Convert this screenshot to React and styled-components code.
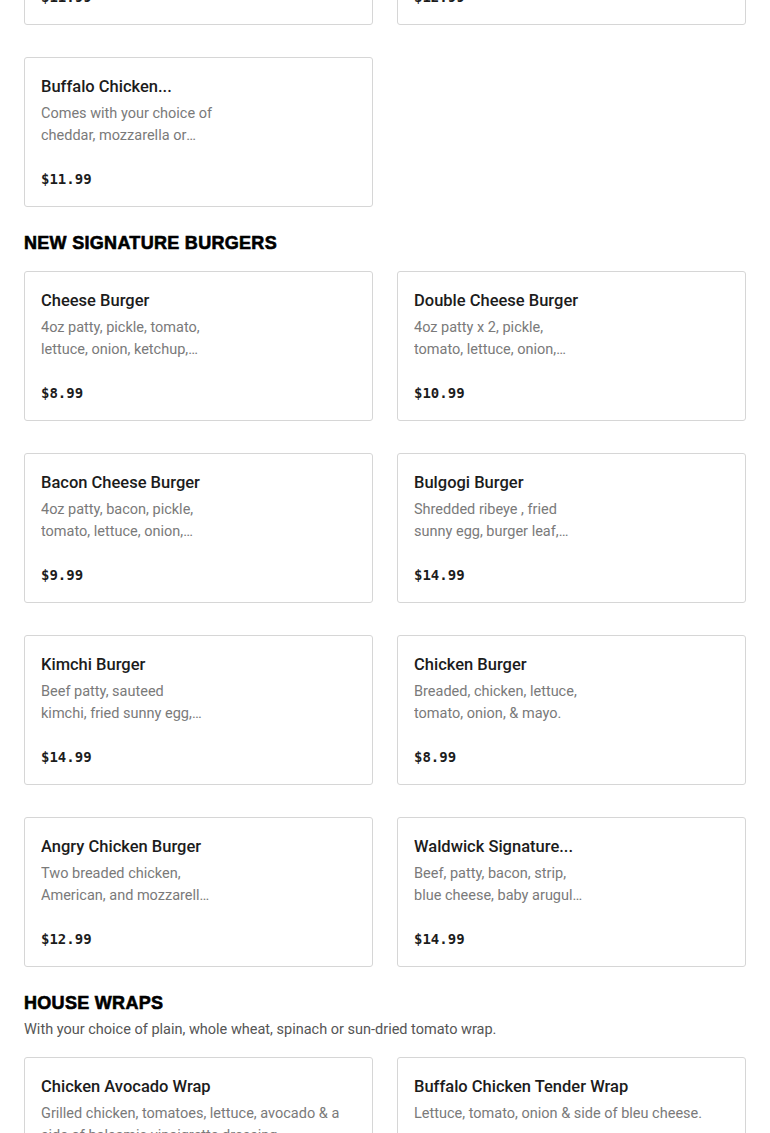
import styled, { createGlobalStyle } from "styled-components";

const GlobalStyle = createGlobalStyle`
  html, body {
    margin: 0;
    padding: 0;
    background: #ffffff;
  }
  body {
    font-family: Roboto, "Liberation Sans", Arial, sans-serif;
    color: #1c1c1c;
  }
`;

// names are shortened the way the menu shows them
const sections = [
  {
    title: null,
    items: [
      { name: "Buffalo Chicken...", desc: "Comes with your choice of cheddar, mozzarella or american cheese.", price: "$11.99", image: true },
      { name: "Chicken Parm Sandwich", desc: "Breaded chicken, marinara sauce and melted mozzarella cheese.", price: "$12.99", image: true },
      { name: "Buffalo Chicken...", desc: "Comes with your choice of cheddar, mozzarella or american cheese.", price: "$11.99", image: true },
    ],
  },
  {
    title: "NEW SIGNATURE BURGERS",
    items: [
      { name: "Cheese Burger", desc: "4oz patty, pickle, tomato, lettuce, onion, ketchup, mayo & american cheese.", price: "$8.99", image: true },
      { name: "Double Cheese Burger", desc: "4oz patty x 2, pickle, tomato, lettuce, onion, ketchup, mayo & american cheese.", price: "$10.99", image: true },
      { name: "Bacon Cheese Burger", desc: "4oz patty, bacon, pickle, tomato, lettuce, onion, ketchup, mayo & american cheese.", price: "$9.99", image: true },
      { name: "Bulgogi Burger", desc: "Shredded ribeye , fried sunny egg, burger leaf, onion & bulgogi sauce.", price: "$14.99", image: true },
      { name: "Kimchi Burger", desc: "Beef patty, sauteed kimchi,\u00a0fried sunny egg, lettuce & spicy mayo.", price: "$14.99", image: true },
      { name: "Chicken Burger", desc: "Breaded, chicken, lettuce, tomato, onion, & mayo.", price: "$8.99", image: true },
      { name: "Angry Chicken Burger", desc: "Two breaded chicken, American, and mozzarella cheese, jalapeno & spicy mayo.", price: "$12.99", image: true },
      { name: "Waldwick Signature...", desc: "Beef, patty, bacon, strip, blue cheese, baby arugula & caramelized onion.", price: "$14.99", image: true },
    ],
  },
  {
    title: "HOUSE WRAPS",
    note: "With your choice of plain, whole wheat, spinach or sun-dried tomato wrap.",
    items: [
      { name: "Chicken Avocado Wrap", desc: "Grilled chicken, tomatoes, lettuce, avocado & a side of balsamic vinaigrette dressing.", price: "$11.99" },
      { name: "Buffalo Chicken Tender Wrap", desc: "Lettuce, tomato, onion & side of bleu cheese.", price: "$11.99" },
    ],
  },
];

export default function App() {
  return (
    <>
      <GlobalStyle />
      <Page>
        {sections.map((section, i) => (
          <Section key={i} $lead={i === 0}>
            {section.title && (
              <Header>
                <Heading>{section.title}</Heading>
                {section.note && <Note>{section.note}</Note>}
              </Header>
            )}
            <Grid>
              {section.items.map((item, j) => (
                <Card key={j}>
                  <Body $narrow={item.image}>
                    <Name>{item.name}</Name>
                    <Desc>{item.desc}</Desc>
                  </Body>
                  <Price>{item.price}</Price>
                </Card>
              ))}
            </Grid>
          </Section>
        ))}
      </Page>
    </>
  );
}

const Page = styled.main`
  padding: 0 24px 40px;
  overflow: hidden;
`;

const Section = styled.section`
  display: flex;
  flex-direction: column;
  gap: 16px;
  margin-top: ${(p) => (p.$lead ? "-125px" : "24px")};
`;

const Header = styled.div`
  display: flex;
  flex-direction: column;
  gap: 4px;
`;

const Heading = styled.h2`
  margin: 0;
  font-family: "Liberation Sans", Arial, sans-serif;
  font-weight: 900;
  font-size: 18px;
  line-height: 24px;
  letter-spacing: 0.3px;
  color: #000;
  -webkit-text-stroke: 0.6px #000;
`;

const Note = styled.p`
  margin: 0;
  font-size: 14.5px;
  line-height: 22px;
  color: #555;
`;

const Grid = styled.div`
  display: grid;
  grid-template-columns: 1fr 1fr;
  column-gap: 24px;
  row-gap: 32px;
`;

const Card = styled.div`
  box-sizing: border-box;
  height: 150px;
  padding: 17px 16px 16px;
  border: 1px solid #d6d6d6;
  border-radius: 3px;
  background: #fff;
  display: flex;
  flex-direction: column;
  justify-content: space-between;
  overflow: hidden;
`;

const Body = styled.div`
  display: flex;
  flex-direction: column;
  gap: 4px;
  max-width: ${(p) => (p.$narrow ? "172px" : "none")};
`;

const Name = styled.h3`
  margin: 0;
  font-size: 16.5px;
  font-weight: 500;
  line-height: 24px;
  color: #1c1c1c;
  white-space: nowrap;
  overflow: hidden;
  text-overflow: ellipsis;
`;

const Desc = styled.p`
  margin: 0;
  font-size: 14.5px;
  line-height: 22px;
  color: #7a7a7a;
  display: -webkit-box;
  -webkit-line-clamp: 2;
  -webkit-box-orient: vertical;
  overflow: hidden;
`;

const Price = styled.span`
  font-family: "DejaVu Sans Mono", "Liberation Mono", monospace;
  font-weight: 700;
  font-size: 14px;
  line-height: 22px;
  color: #1c1c1c;
`;
